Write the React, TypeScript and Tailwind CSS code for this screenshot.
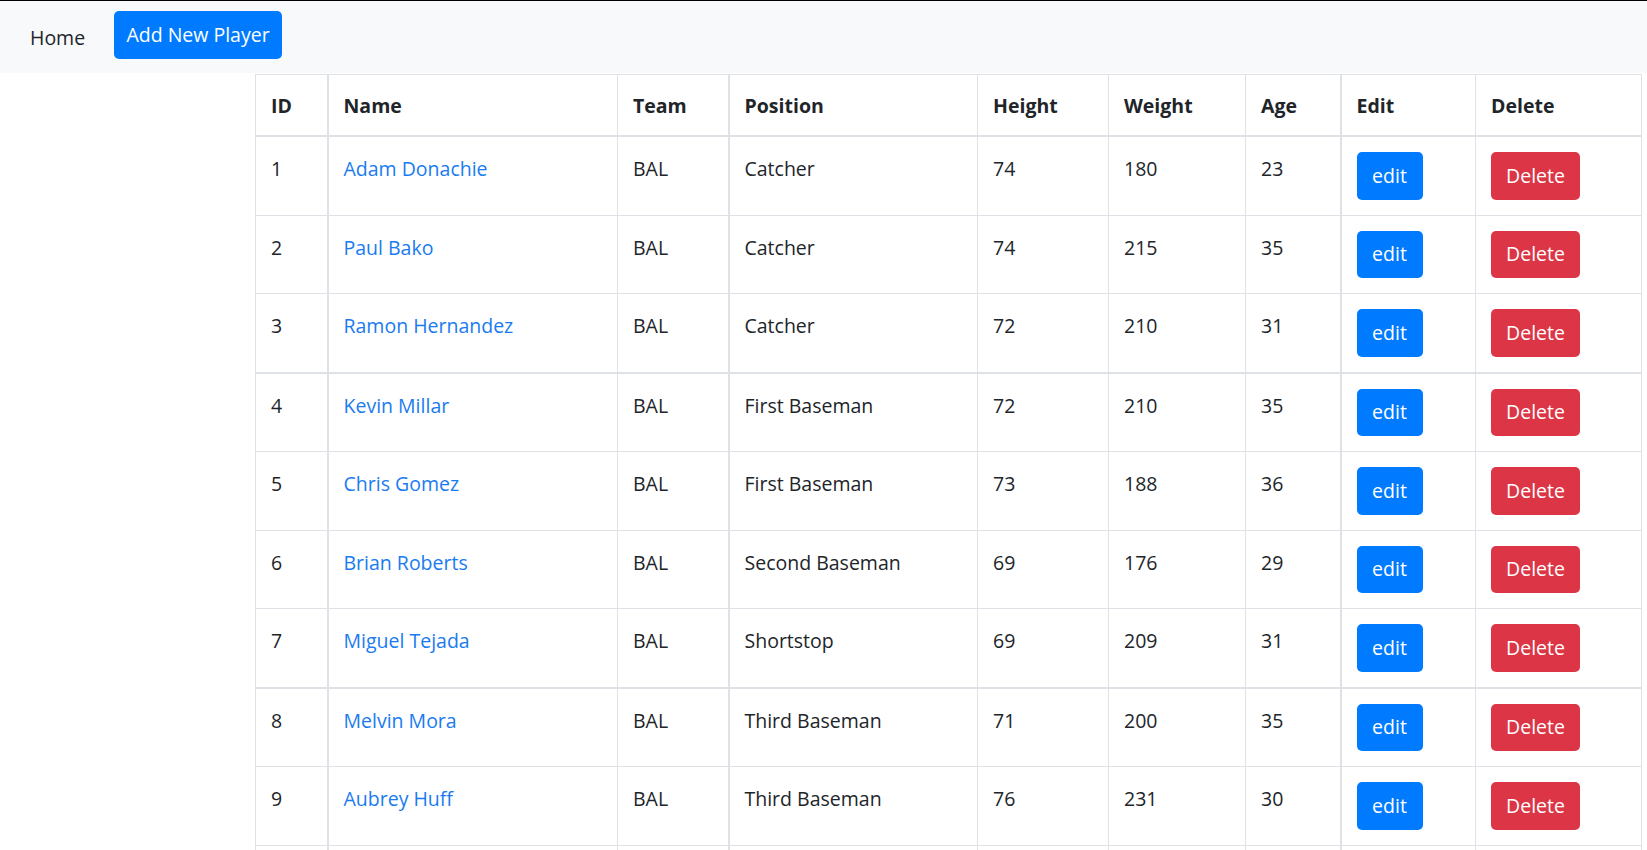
import React from "react";

interface Player {
  id: number;
  name: string;
  team: string;
  position: string;
  height: number;
  weight: number;
  age: number;
}

const players: Player[] = [
  { id: 1, name: "Adam Donachie", team: "BAL", position: "Catcher", height: 74, weight: 180, age: 23 },
  { id: 2, name: "Paul Bako", team: "BAL", position: "Catcher", height: 74, weight: 215, age: 35 },
  { id: 3, name: "Ramon Hernandez", team: "BAL", position: "Catcher", height: 72, weight: 210, age: 31 },
  { id: 4, name: "Kevin Millar", team: "BAL", position: "First Baseman", height: 72, weight: 210, age: 35 },
  { id: 5, name: "Chris Gomez", team: "BAL", position: "First Baseman", height: 73, weight: 188, age: 36 },
  { id: 6, name: "Brian Roberts", team: "BAL", position: "Second Baseman", height: 69, weight: 176, age: 29 },
  { id: 7, name: "Miguel Tejada", team: "BAL", position: "Shortstop", height: 69, weight: 209, age: 31 },
  { id: 8, name: "Melvin Mora", team: "BAL", position: "Third Baseman", height: 71, weight: 200, age: 35 },
  { id: 9, name: "Aubrey Huff", team: "BAL", position: "Third Baseman", height: 76, weight: 231, age: 30 },
];

// text cells sit a bit lower than the buttons, like the original bootstrap table
const cell = "border border-[#dee2e6] px-[15px] pt-[17px] pb-[13px] align-top";
const btnCell = "border border-[#dee2e6] px-[15px] pt-[15px] pb-[15px] align-top";
const headCell = "border border-[#dee2e6] px-[15px] pt-[16px] pb-[14px] align-top border-b-2";

function App() {
  return (
    <div
      className="min-h-[850px] bg-white text-[#212529] text-[19.5px] leading-[30px]"
      style={{ fontFamily: '"Open Sans", "Noto Sans", sans-serif' }}
    >
      <nav className="h-[73px] bg-[#f8f9fa] border-t border-black flex items-start pt-[10px] pl-[30px]">
        <a className="w-[84px] mt-[12px] text-[#212529]">Home</a>
        <button className="w-[168px] h-[48px] rounded-[5px] bg-[#007bff] text-white text-[19.5px]">
          Add New Player
        </button>
      </nav>

      <div className="pl-[255px] pr-[6px] pt-px">
        <table className="w-full table-fixed border-collapse">
          <colgroup>
            <col className="w-[72px]" />
            <col className="w-[290px]" />
            <col className="w-[111px]" />
            <col className="w-[249px]" />
            <col className="w-[131px]" />
            <col className="w-[137px]" />
            <col className="w-[95px]" />
            <col className="w-[135px]" />
            <col className="w-[166px]" />
          </colgroup>
          <thead>
            <tr className="text-left font-bold">
              <th className={`${headCell} border-r-2`}>ID</th>
              <th className={headCell}>Name</th>
              <th className={`${headCell} border-r-2`}>Team</th>
              <th className={headCell}>Position</th>
              <th className={headCell}>Height</th>
              <th className={headCell}>Weight</th>
              <th className={`${headCell} border-r-2`}>Age</th>
              <th className={headCell}>Edit</th>
              <th className={headCell}>Delete</th>
            </tr>
          </thead>
          <tbody>
            {players.map((p) => {
              const thick = p.id === 3 || p.id === 7 ? "border-b-2" : "";
              return (
                <tr key={p.id}>
                  <td className={`${cell} ${thick} border-r-2`}>{p.id}</td>
                  <td className={`${cell} ${thick}`}>
                    <a className="text-[#1a7bf0]">{p.name}</a>
                  </td>
                  <td className={`${cell} ${thick} border-r-2`}>{p.team}</td>
                  <td className={`${cell} ${thick}`}>{p.position}</td>
                  <td className={`${cell} ${thick}`}>{p.height}</td>
                  <td className={`${cell} ${thick}`}>{p.weight}</td>
                  <td className={`${cell} ${thick} border-r-2`}>{p.age}</td>
                  <td className={`${btnCell} ${thick}`}>
                    <button className="block w-[66px] h-[47.5px] rounded-[5px] bg-[#007bff] text-white">
                      edit
                    </button>
                  </td>
                  <td className={`${btnCell} ${thick}`}>
                    <button className="block w-[89px] h-[47.5px] rounded-[5px] bg-[#dc3545] text-white">
                      Delete
                    </button>
                  </td>
                </tr>
              );
            })}
            {/* next row continues below the fold; only its top edge shows */}
            <tr className="h-[78px]">
              <td className={`${cell} border-r-2`} />
              <td className={cell} />
              <td className={`${cell} border-r-2`} />
              <td className={cell} />
              <td className={cell} />
              <td className={cell} />
              <td className={`${cell} border-r-2`} />
              <td className={cell} />
              <td className={cell} />
            </tr>
          </tbody>
        </table>
      </div>
    </div>
  );
}

export default App;
